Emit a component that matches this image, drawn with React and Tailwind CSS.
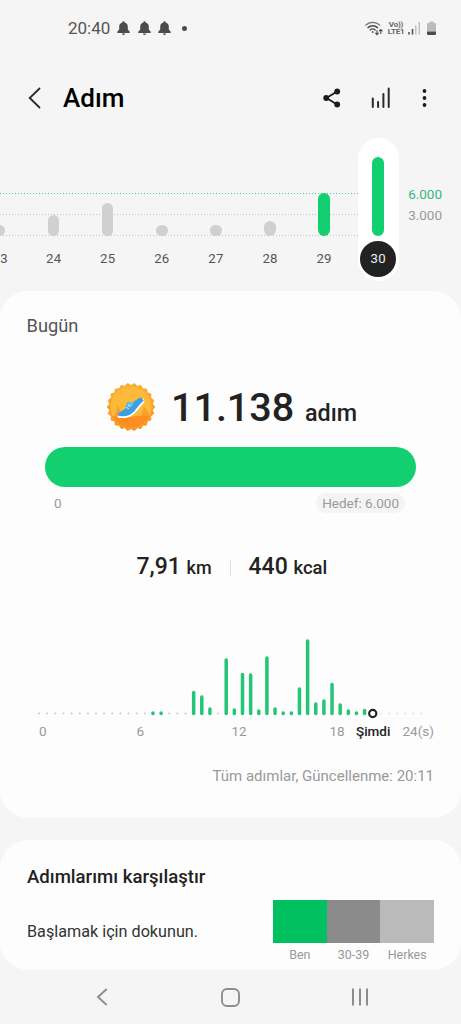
import React from 'react';

const days = [
  { label: '3', height: 11, partial: true },
  { label: '24', height: 21 },
  { label: '25', height: 33 },
  { label: '26', height: 11 },
  { label: '27', height: 11 },
  { label: '28', height: 15 },
  { label: '29', height: 43, reached: true },
  { label: '30', height: 79, reached: true, selected: true },
];

// Bar heights for each half hour slot, 0 is an empty slot
const slots = [
  0, 0, 0, 0, 0, 0, 0, 0, 0, 0, 0, 0, 0, 0, 4, 4, 0, 0, 0, 24.5, 20, 8, 0, 57, 7,
  42.5, 42, 6, 59, 8, 4, 4, 28, 76, 13, 16, 32.5, 12, 6, 4, 6.5,
];

const SLOT_WIDTH = 8.14;

const compare = [
  { label: 'Ben', color: 'bg-[#00c060]' },
  { label: '30-39', color: 'bg-[#8b8b8b]' },
  { label: 'Herkes', color: 'bg-[#bababa]' },
];

const Bell = () => (
  <svg width="13" height="15" viewBox="0 0 13 15" fill="#4c4c4c">
    <path d="M6.5 0.3c.7 0 1.1.5 1.1 1.1 2 .5 3.200 2 3.200 4v3.200l1.900 2.200v1.200H.3v-1.200l1.900-2.200V5.400c0-2 1.200-3.500 3.200-4 0-.6.4-1.100 1.100-1.100z" />
    <path d="M5 12.500h3a1.500 1.500 0 0 1-3 0z" />
  </svg>
);

const StatusBar = () => (
  <div className="flex h-14 items-center pl-[68px] pr-[25px] text-[#555]">
    <span className="w-[49px] text-[17px] leading-5">20:40</span>
    <div className="flex items-center gap-[7.5px]">
      <Bell />
      <Bell />
      <Bell />
      <span className="ml-[3px] h-[5px] w-[5px] rounded-full bg-[#4c4c4c]" />
    </div>
    <div className="ml-auto flex items-center">
      <svg width="18" height="15" viewBox="0 0 18 15" fill="none" stroke="#4c4c4c" strokeLinecap="round">
        <path d="M.8 4.200C4.500.3 11 .3 14.700 4.200" strokeWidth="1.200" stroke="#777" />
        <path d="M3 6.600c2.700-2.600 6.800-2.600 9.500 0" strokeWidth="1.500" />
        <path d="M5.200 9c1.500-1.300 3.600-1.300 5 0" strokeWidth="1.400" />
        <circle cx="7.600" cy="11" r=".5" fill="#4c4c4c" strokeWidth=".8" />
        <path d="M12 9.500v4M10.600 12.200l1.400 1.400 1.400-1.400M15.800 12.500V8.500M14.400 9.900l1.400-1.400 1.400 1.400" strokeWidth="1.100" />
      </svg>
      <div className="ml-1 w-[18px] whitespace-nowrap text-center text-[8px] font-bold leading-[7.5px] tracking-[-0.2px] text-[#666]">
        <div>Vo))</div>
        <div>LTE1</div>
      </div>
      <svg className="ml-[3px]" width="12" height="14" viewBox="0 0 12 14">
        <path d="M1 11v2.500M4.500 8v5.500" stroke="#4c4c4c" strokeWidth="1.500" />
        <path d="M7.800 4.500v9M11.200 1v12.500" stroke="#b5b5b5" strokeWidth="1.200" />
      </svg>
      <svg className="ml-[7px]" width="9" height="14" viewBox="0 0 9 14">
        <path d="M0 3a1 1 0 0 1 1-1h1.500V.5h4V2H8a1 1 0 0 1 1 1v7.500H0z" fill="#bbb" />
        <path d="M0 10.500h9V13a1 1 0 0 1-1 1H1a1 1 0 0 1-1-1z" fill="#4c4c4c" />
      </svg>
    </div>
  </div>
);

const Header = () => (
  <div className="flex h-[82px] items-center pl-[28px] pr-[34px] pt-[2px]">
    <svg width="13" height="22" viewBox="0 0 13 22" fill="none" stroke="#2a2a2a" strokeWidth="1.800" strokeLinecap="round">
      <path d="M11.500 1.500L1.700 11l9.800 9.500" />
    </svg>
    <h1 className="ml-[22px] text-[26px] font-medium leading-8 text-black">Adım</h1>
    <div className="ml-auto flex items-center">
      <svg width="18" height="20" viewBox="0 0 18 20" fill="#1c1c1c">
        <path d="M14 3.500L3.500 10 14 16.500" fill="none" stroke="#1c1c1c" strokeWidth="1.800" />
        <circle cx="3.200" cy="10" r="2.900" />
        <circle cx="14.200" cy="3.500" r="2.900" />
        <circle cx="14.200" cy="16.500" r="2.900" />
      </svg>
      <svg className="ml-[30px]" width="20" height="22" viewBox="0 0 20 22" stroke="#2a2a2a" strokeWidth="2" strokeLinecap="round">
        <path d="M1.800 11.500V20M7.100 15v5M12.400 7v13M17.700 1.500V20" />
      </svg>
      <svg className="ml-[31px]" width="5" height="20" viewBox="0 0 5 20" fill="#1c1c1c">
        <circle cx="2.500" cy="3" r="1.900" />
        <circle cx="2.500" cy="10" r="1.900" />
        <circle cx="2.500" cy="17" r="1.900" />
      </svg>
    </div>
  </div>
);

const DayChart = () => (
  <div className="relative flex h-[152.5px] overflow-hidden">
    <svg className="absolute left-0 top-0" width="358" height="143" strokeWidth="1">
      <path d="M0 55.500H358" stroke="#5fc39a" strokeDasharray="1 2" />
      <path d="M0 76.500H358M0 97.500H358" stroke="#c4c4c4" strokeDasharray="1 2" />
    </svg>
    <div className="relative -ml-[27.5px] flex h-[143px]">
      {days.map((day) => (
        <div key={day.label} className="flex w-[54.1px] justify-center">
          <div
            className={`flex w-[41px] flex-col items-center justify-end rounded-full pb-[4px] ${
              day.selected ? 'bg-white' : ''
            }`}
          >
            <div
              className={`w-[11.500px] rounded-full ${day.reached ? 'bg-[#12d06f]' : 'bg-[#d0d0d0]'}`}
              style={{ height: day.height }}
            />
            <span
              className={`mt-[5px] flex h-9 w-9 items-center justify-center rounded-full text-[13.2px] tracking-[0.2px] ${
                day.selected ? 'bg-[#222] text-[#eee]' : 'text-[#555]'
              } ${day.partial ? 'pl-[9px]' : ''}`}
            >
              {day.label}
            </span>
          </div>
        </div>
      ))}
    </div>
    <div className="ml-[2.9px] pt-[46px] text-[13.500px] leading-[21px]">
      <div className="text-[#35b67c]">6.000</div>
      <div className="text-[#9a9a9a]">3.000</div>
    </div>
  </div>
);

const scallops = Array.from({ length: 44 }, (_, i) => {
  const r = i % 2 ? 21.5 : 23.8;
  const a = (i * Math.PI) / 22;
  return `${(24 + r * Math.cos(a)).toFixed(1)},${(24 + r * Math.sin(a)).toFixed(1)}`;
}).join(' ');

const Badge = () => (
  <svg width="48" height="48" viewBox="0 0 48 48">
    <defs>
      <clipPath id="face">
        <circle cx="24" cy="24" r="20.500" />
      </clipPath>
      <linearGradient id="rim" x1="0" y1="0" x2="0" y2="1">
        <stop offset="0" stopColor="#f7b02f" />
        <stop offset="1" stopColor="#fb9422" />
      </linearGradient>
    </defs>
    <polygon points={scallops} fill="url(#rim)" stroke="url(#rim)" strokeLinejoin="round" />
    <g clipPath="url(#face)">
      <rect width="48" height="48" fill="#fcb93a" />
      <path d="M7 34l4-12 3 8 4 4 16-1 3-10 4 6 3 6z" fill="#fa9f2c" />
      <path d="M2 34c8-2 14 1 22 0s14-2 22 0v14H2z" fill="#fd8d20" />
    </g>
    <path d="M10.500 32.500c-.3 2 1 2.500 3 2.500 7 .3 11-1.500 15-5.500 3.500-3.500 6-8 9-10.500l-1-3.500-8 6-8 8z" fill="#fff" />
    <path d="M10.500 32.500c.5-3 4-4.500 7.500-6.500.8-3 1.500-5.500 3.500-7.500 2 1.500 4 1 6-.5 3-2 4.500-2.800 6.500-3.500l2.800 3.300c-4 3-6.300 6.700-9.300 10.200-4 4.500-10 6.500-17 4.500z" fill="#3d9fe0" />
    <path d="M21.500 18.500c2 1.500 4 1 6-.5l-2 4.500-6 3z" fill="#6cc0f0" />
    <path d="M18.500 24l3.500 2M20.500 21.500l3.500 2" stroke="#c5e6fa" strokeWidth="1" />
  </svg>
);

const HourChart = () => (
  <svg className="block" width="461" height="86" viewBox="0 0 461 86">
    {Array.from({ length: 48 }, (_, i) => {
      const x = 39 + i * SLOT_WIDTH;
      const height = slots[i];
      if (i === 41) {
        return <circle key={i} cx={x} cy="79.500" r="3.600" fill="#fff" stroke="#222" strokeWidth="2.200" />;
      }
      return height ? (
        <rect key={i} x={x - 1.75} y={81.2 - height} width="3.500" height={height} rx="1.700" fill="#25c578" />
      ) : (
        <circle key={i} cx={x} cy="79.500" r="1.100" fill={i > 41 ? '#e2e2e2' : '#cbcbcb'} />
      );
    })}
  </svg>
);

const TodayCard = () => (
  <section className="h-[527.5px] rounded-[28px] bg-[#fdfdfd] pt-[23.5px]">
    <h2 className="pl-[26.500px] text-[18.3px] leading-6 text-[#555]">Bugün</h2>

    <div className="mt-[45px] flex h-[48px] items-center pl-[107px] text-[#222]">
      <Badge />
      <div className="ml-[16px] flex items-baseline pt-px font-medium">
        <span className="w-[134px] text-[39.5px] leading-[48px]">11.138</span>
        <span className="text-[23.3px]">adım</span>
      </div>
    </div>

    <div className="ml-[45px] mt-4 h-[40px] w-[371px] rounded-full bg-[#12d06f]" />
    <div className="mt-[6px] flex h-5 items-center justify-between pl-[54px] pr-[56px] text-[13.500px] text-[#999]">
      <span>0</span>
      <span className="rounded-full bg-[#f4f4f4] px-[6px] leading-5">Hedef: 6.000</span>
    </div>

    <div className="mt-[40.5px] flex h-7 items-center pl-[136.5px] text-[23px] font-medium text-[#222]">
      <div className="w-[93px]">
        7,91 <span className="text-[18px]">km</span>
      </div>
      <div className="h-4 w-px bg-[#ddd]" />
      <div className="ml-[18px]">
        440 <span className="text-[18.500px]">kcal</span>
      </div>
    </div>

    <div className="mt-[52.5px]">
      <HourChart />
    </div>
    <div className="flex h-[22px] items-center pl-[39px] text-[13.500px] text-[#999]">
      <span className="w-[97.500px]">0</span>
      <span className="w-[95px]">6</span>
      <span className="w-[98px]">12</span>
      <span className="w-[26.500px]">18</span>
      <span className="w-[46.500px] font-medium text-[#222]">Şimdi</span>
      <span>24(s)</span>
    </div>

    <p className="mt-[22.5px] pr-[27px] text-right text-[15px] leading-[22px] text-[#999]">
      Tüm adımlar, Güncellenme: 20:11
    </p>
  </section>
);

const CompareCard = () => (
  <section className="mt-[22px] h-[130px] rounded-[28px] bg-[#fdfdfd] pl-[27px] pr-[27px] pt-[25px]">
    <h2 className="text-[18.6px] font-medium leading-6 text-[#222]">Adımlarımı karşılaştır</h2>
    <div className="mt-[11px] flex justify-between">
      <p className="pt-5 text-[16.2px] leading-6 text-[#333]">Başlamak için dokunun.</p>
      <div className="flex">
        {compare.map((item) => (
          <div key={item.label} className="w-[53.660px] text-center">
            <div className={`h-[43px] ${item.color}`} />
            <div className="mt-[3px] text-[12.500px] leading-[18px] text-[#999]">{item.label}</div>
          </div>
        ))}
      </div>
    </div>
  </section>
);

const NavBar = () => (
  <nav className="flex h-[54px] items-center">
    <svg className="ml-[96px]" width="12" height="18" viewBox="0 0 12 18" fill="none" stroke="#8d8d8d" strokeWidth="1.900">
      <path d="M10.700 1L2 9l8.700 8" />
    </svg>
    <svg className="ml-[113px]" width="19" height="19" viewBox="0 0 19 19" fill="none" stroke="#8d8d8d" strokeWidth="1.900">
      <rect x="1" y="1" width="17" height="17" rx="5" />
    </svg>
    <svg className="ml-[111px]" width="18" height="18" viewBox="0 0 18 18" stroke="#8d8d8d" strokeWidth="2">
      <path d="M2 .5v17M9 .5v17M16 .5v17" />
    </svg>
  </nav>
);

const App = () => (
  <div className="h-[1024px] w-[461px] overflow-hidden bg-[#f5f5f5] font-[Roboto,sans-serif]">
    <StatusBar />
    <Header />
    <DayChart />
    <TodayCard />
    <CompareCard />
    <NavBar />
  </div>
);

export default App;
